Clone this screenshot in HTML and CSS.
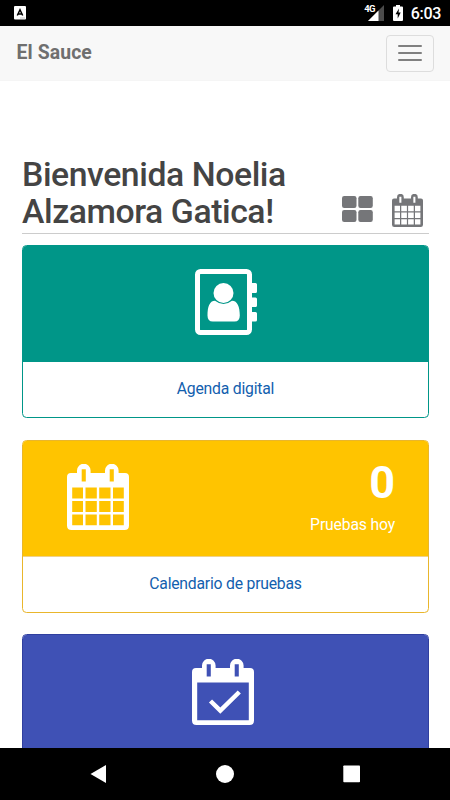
FILE: index.html
```html
<!DOCTYPE html>
<html lang="es">
<head>
<meta charset="utf-8">
<title>El Sauce</title>
<link rel="stylesheet" href="styles.css">
</head>
<body>
<svg class="defs" aria-hidden="true">
  <symbol id="posts" viewBox="0 0 62 66">
    <path fill-rule="evenodd" d="M0 13Q0 9 4 9H10V6.500A6.800 6.800 0 0 1 23.600 6.500V9H38V6.500A6.800 6.800 0 0 1 51.600 6.500V9H58Q62 9 62 13V61.500Q62 66 57.500 66H4.500Q0 66 0 61.500ZM14.700 5.300V17.500H18.800V5.300ZM42.700 5.300V17.500H46.800V5.300ZM5.200 23.500V61.200H56.800V23.500Z"/>
  </symbol>
  <symbol id="calendar" viewBox="0 0 62 66">
    <use href="#posts" width="62" height="66"/>
    <path d="M4 34.500H58V37H4ZM4 48H58V50.500H4ZM16 22H18.500V63H16ZM29.800 22H32.200V63H29.800ZM43.500 22H46V63H43.500Z"/>
  </symbol>
</svg>
<div class="screen">
  <header class="status">
    <svg class="app-mark" viewBox="0 0 12 14"><rect width="12" height="13.500" rx="1" fill="#fff"/><path d="M3.300 9.500 6 3.800 8.700 9.500M4.500 7.900H7.500" fill="none" stroke="#000" stroke-width="1.500"/><path d="M6.500 12H11" stroke="#888" stroke-dasharray="1 1"/></svg>
    <div class="status-right">
      <span class="network">4G</span>
      <svg class="signal" viewBox="0 0 17 16"><path d="M16 0V16H0Z" fill="#4b4b4b"/><path d="M10.500 5.500V16H0Z" fill="#fff"/></svg>
      <svg class="battery" viewBox="0 0 10 16"><path d="M3 0H7V1.500H9Q10 1.500 10 2.500V15Q10 16 9 16H1Q0 16 0 15V2.500Q0 1.500 1 1.500H3Z" fill="#fff"/><path d="M6 3.500 2.500 9.200H4.700V13.500L7.700 7.500H5.500Z"/></svg>
      <span class="time">6:03</span>
    </div>
  </header>
  <nav class="navbar">
    <span class="brand">El Sauce</span>
    <button class="toggle" aria-label="Menu"><i></i><i></i><i></i></button>
  </nav>
  <main>
    <div class="heading">
      <h1>Bienvenida Noelia<br><span>Alzamora Gatica!</span></h1>
      <div class="views">
        <svg class="grid-icon" viewBox="0 0 31 26"><rect width="14.500" height="12" rx="2.200"/><rect x="16.300" width="14.500" height="12" rx="2.200"/><rect y="14" width="14.500" height="12" rx="2.200"/><rect x="16.300" y="14" width="14.500" height="12" rx="2.200"/></svg>
        <svg class="small-calendar"><use href="#calendar"/></svg>
      </div>
    </div>
    <section class="card teal">
      <div class="panel"><svg class="icon address" viewBox="0 0 62 66"><rect x="2.500" y="2.500" width="52" height="61" rx="3" fill="none" stroke="#fff" stroke-width="5"/><path d="M56 14H60.500Q62 14 62 15.500V22.500Q62 24 60.500 24H56ZM56 28.500H60.500Q62 28.500 62 30V36.500Q62 38 60.500 38H56ZM56 43H60.500Q62 43 62 44.500V51Q62 52.500 60.500 52.500H56Z"/><circle cx="28.500" cy="24" r="10"/><path d="M20 31.800Q24 35 28.500 35T37 31.800C42.500 31.800 44.800 38 44.800 46.500Q44.800 52.500 39.500 52.500H17.800Q12.500 52.500 12.500 46.500C12.500 38 14.500 31.800 20 31.800Z"/></svg></div>
      <a class="label agenda">Agenda digital</a>
    </section>
    <section class="card yellow">
      <div class="panel split"><svg class="icon"><use href="#calendar"/></svg><div class="count"><strong>0</strong><span>Pruebas hoy</span></div></div>
      <a class="label">Calendario de pruebas</a>
    </section>
    <section class="card blue">
      <div class="panel"><svg class="icon" viewBox="0 0 62 66"><use href="#posts" width="62" height="66"/><path d="M18.500 42 28.300 51.500 47.300 33" fill="none" stroke="#fff" stroke-width="4.500"/></svg></div>
    </section>
  </main>
  <footer class="system">
    <svg viewBox="0 0 450 52"><path d="M90.500 26 106 17V35Z"/><circle cx="225" cy="26" r="9"/><rect x="343.300" y="17.500" width="16.700" height="16.700" rx=".8"/></svg>
  </footer>
</div>
</body>
</html>
```

FILE: styles.css
```css
* { box-sizing: border-box; }
body { margin: 0; font-family: Roboto, sans-serif; font-size: 15.75px; background: #fff; }
svg { display: block; }
.defs { position: absolute; width: 0; height: 0; }
.screen { display: flex; flex-direction: column; width: 450px; height: 800px; overflow: hidden; }
.status { flex: none; height: 26px; padding: 0 9px 0 14px; display: flex; align-items: center; justify-content: space-between; background: #000; color: #fff; }
.app-mark { width: 12px; height: 14px; }
.status-right { display: flex; align-items: center; }
.network { font-size: 9.5px; font-weight: 700; line-height: 10px; margin: -9px -7px 0 0; letter-spacing: -.8px; z-index: 1; }
.signal { width: 17px; height: 16px; margin-right: 8px; }
.battery { width: 10px; height: 16px; margin-right: 8px; }
.time { font-size: 16px; font-weight: 500; line-height: 26px; padding-top: 2px; letter-spacing: -.3px; }
.navbar { flex: none; height: 55px; padding: 0 16px; display: flex; align-items: center; justify-content: space-between; background: #f8f8f8; border-bottom: 1px solid #f5f5f5; }
.brand { color: #6f6f6f; font-size: 19.4px; font-weight: 700; letter-spacing: .1px; padding: 0 0 1px .5px; }
.toggle { width: 48px; height: 37px; padding: 0; display: flex; flex-direction: column; align-items: center; justify-content: center; gap: 5px; background: none; border: 1px solid #ddd; border-radius: 4px; }
.toggle i { width: 24px; height: 2px; background: #808080; border-radius: 1px; }
main { flex: 1; min-height: 0; overflow: hidden; padding: 75px 21px 0 22px; }
.heading { height: 78px; display: flex; justify-content: space-between; align-items: flex-end; border-bottom: 1px solid #ccc; margin-bottom: 11px; }
h1 { margin: 0; align-self: flex-start; font-size: 33.75px; line-height: 37px; font-weight: 500; letter-spacing: -.42px; color: #444; white-space: nowrap; }
.views { display: flex; align-items: flex-end; gap: 19px; padding: 0 6px 6px 0; fill: #757679; }
.grid-icon { width: 31px; height: 26px; margin-bottom: 5px; }
.small-calendar { width: 31px; height: 33px; }
.card { height: 173px; margin-bottom: 21.500px; border: 1px solid; border-radius: 4.500px; overflow: hidden; }
.teal { border-color: #009688; }
.yellow { border-color: #e9b62c; }
.blue { border-color: #303f9f; }
.panel { height: 116px; display: flex; justify-content: center; padding-top: 23px; fill: #fff; color: #fff; }
.teal .panel { background: #009688; }
.yellow .panel { background: #ffc400; }
.blue .panel { background: #3f51b5; padding: 24px 5px 0 0; }
.icon { width: 62px; height: 66px; }
.address { margin-left: 0; }
.split { justify-content: space-between; padding: 23px 33px 0 44px; border-bottom: 1px solid #efd18a; }
.count { display: flex; flex-direction: column; align-items: flex-end; }
.count strong { font-size: 45px; line-height: 37px; font-weight: 700; }
.count span { margin-top: 13px; line-height: 21px; letter-spacing: -.17px; }
.label { display: block; text-align: center; line-height: 53px; color: #1260ae; letter-spacing: -.22px; }
.system { flex: none; height: 52px; background: #000; fill: #fff; }
```
